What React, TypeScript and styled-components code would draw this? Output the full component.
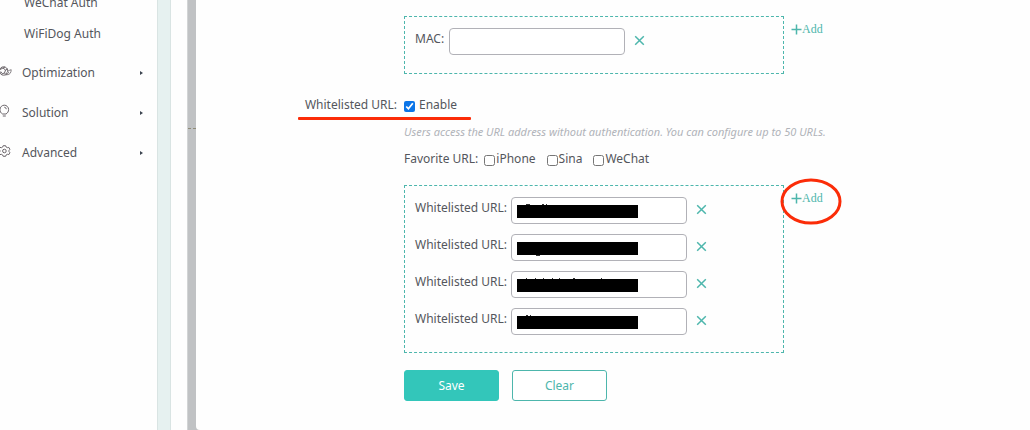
import React from 'react';
import styled, { createGlobalStyle } from 'styled-components';

const teal = '#4db6ac';
const red = '#fb2c08';

const GlobalStyle = createGlobalStyle`
  *, *::before, *::after { box-sizing: border-box; }
  body {
    margin: 0;
    background: #fefefe;
    color: #54565c;
    font-family: "Noto Sans", "Open Sans", sans-serif;
    font-size: 12px;
    line-height: 18px;
  }
  button, input { font: inherit; }
`;

const Page = styled.div`
  display: flex;
  min-height: 100vh;
  overflow: hidden;
`;

const Sidebar = styled.nav`
  flex: 0 0 157px;
  margin-top: -13px;
`;

const NavList = styled.ul`
  margin: 0;
  padding: 0;
  list-style: none;
`;

const SubList = styled(NavList)`
  padding-bottom: 4px;
`;

const SubLink = styled.a`
  display: flex;
  align-items: center;
  height: 31px;
  padding-left: 24px;
  color: inherit;
  text-decoration: none;
`;

const NavLink = styled.a`
  display: flex;
  align-items: center;
  height: 40px;
  padding-right: 14px;
  color: inherit;
  text-decoration: none;
`;

const NavIcon = styled.svg`
  flex: none;
  width: 12px;
  height: 14px;
  margin-right: 10px;
  margin-bottom: 4px;
  fill: none;
  stroke: #6b656a;
  stroke-width: 1;
`;

const Arrow = styled.span`
  margin-left: auto;
  border: solid transparent;
  border-width: 2px 0 2px 3px;
  border-left-color: #3c4450;
`;

const Track = styled.div`
  flex: 0 0 14px;
  margin-right: 16px;
  background: #e6f1f0;
  border: solid #d9e4e3;
  border-width: 0 1px;
`;

const Splitter = styled.div`
  flex: 0 0 9px;
  padding-top: 128px;
  background: #c0c2c4;
  border-left: 1px solid #d2d4d5;
`;

const Grip = styled.div`
  height: 1px;
  border-top: 1px dashed #8f8c78;
`;

const Main = styled.main`
  flex: 1;
  min-width: 0;
  display: flex;
  background: #c0c2c4;
`;

const Form = styled.form`
  flex: 1;
  min-width: 0;
  padding: 16px 16px 28px 0;
  background: #fefefe;
  border-bottom-left-radius: 4px;
`;

const FormRow = styled.div<{ $gap?: number }>`
  display: grid;
  grid-template-columns: 201px minmax(0, 1fr);
  column-gap: 7px;
  margin-bottom: ${(p) => p.$gap ?? 0}px;
`;

const RowLabel = styled.div`
  text-align: right;
`;

const Underlined = styled.div`
  position: relative;
`;

const Underline = styled.div`
  position: absolute;
  left: 102px;
  top: 21px;
  width: 173px;
  height: 3px;
  border-radius: 1px;
  background: ${red};
`;

const Controls = styled.div`
  grid-column: 2;
  display: flex;
  align-items: flex-start;
`;

const EntryBox = styled.div`
  display: grid;
  row-gap: 10px;
  flex: 0 1 380px;
  padding: 11px 10px 18px;
  border: 1px dashed ${teal};
`;

const UrlBox = styled(EntryBox)`
  padding-bottom: 17px;
`;

const Entry = styled.div`
  display: flex;
  align-items: flex-start;
`;

const EntryLabel = styled.label`
  min-width: 30px;
  padding-top: 2px;
  white-space: nowrap;
`;

const InputWrap = styled.div`
  position: relative;
  flex: 0 1 176px;
  margin-left: 4px;
`;

const TextInput = styled.input`
  display: block;
  width: 100%;
  height: 27px;
  padding: 0 6px;
  background: #fff;
  border: 1px solid #b1b1b7;
  border-radius: 4px;
`;

const Redaction = styled.svg`
  position: absolute;
  left: 6px;
  top: 7px;
  width: 121px;
  height: 15px;
`;

const RemoveButton = styled.button`
  display: flex;
  margin: 7px 0 0 9px;
  padding: 0;
  border: 0;
  background: none;
  stroke: ${teal};
`;

const AddWrap = styled.div`
  position: relative;
  margin: 4px 0 0 7px;
`;

const AddButton = styled.button`
  display: flex;
  align-items: center;
  padding: 0;
  border: 0;
  background: none;
  color: ${teal};
  stroke: ${teal};
  font-family: "Liberation Serif", serif;
`;

const Circle = styled.svg`
  position: absolute;
  left: -11px;
  top: -11px;
  width: 62px;
  height: 47px;
  pointer-events: none;
`;

const CheckLabel = styled.label<{ $spaced?: boolean }>`
  display: flex;
  align-items: center;
  gap: ${(p) => (p.$spaced ? 4 : 1)}px;
  margin-right: 11px;
`;

const Checkbox = styled.input`
  width: 11px;
  height: 11px;
  margin: 2px 0 0;
  accent-color: #0b75e8;
`;

const Hint = styled.p`
  grid-column: 2;
  margin: 0;
  color: #b0b3b9;
  font-size: 11px;
  font-style: italic;
`;

const Legend = styled.span`
  margin-right: 6px;
`;

const Action = styled.button<{ $primary?: boolean }>`
  width: 95px;
  height: 31px;
  margin-right: 13px;
  padding: 0;
  border: 1px solid ${(p) => (p.$primary ? '#33c6ba' : teal)};
  border-radius: 3px;
  background: ${(p) => (p.$primary ? '#33c6ba' : '#fff')};
  color: ${(p) => (p.$primary ? '#fff' : teal)};
  font-size: 12px;
`;

const Remove = ({ name }: { name: string }) => (
  <RemoveButton type="button" aria-label={`Remove ${name}`}>
    <svg width="11" height="11" viewBox="0 0 11 11" strokeWidth="1.5">
      <path d="M1.2 1.2l8.6 8.6M9.8 1.2l-8.6 8.6" />
    </svg>
  </RemoveButton>
);

const Add = ({ circled }: { circled?: boolean }) => (
  <AddWrap>
    <AddButton type="button">
      <svg width="11" height="11" viewBox="0 0 11 11" strokeWidth="1.5">
        <path d="M5.5 0.5v10M0.5 5.5h10" />
      </svg>
      Add
    </AddButton>
    {circled && (
      <Circle viewBox="0 0 62 47" fill="none" stroke={red} strokeWidth="3">
        <ellipse cx="31" cy="23.5" rx="29" ry="21.6" />
      </Circle>
    )}
  </AddWrap>
);

const sections = [
  {
    name: 'Optimization',
    icon: (
      <>
        <circle cx="3.6" cy="7" r="4.2" />
        <path d="M0 5.500l3-1.500 2.500 2-1 3L1.500 10M3 4l2-1M5.500 6L8 5M4.500 9l1.500 1.500M0 8l2 .5" />
        <path d="M6.500 10.500c0-3 2-4 4.700-4.800 0 3-1.400 5-4 5zM6 11.500l3-3.500" strokeWidth="0.8" fill="#fefefe" />
      </>
    ),
  },
  {
    name: 'Solution',
    icon: (
      <path d="M2.600 10C0.800 9 -.2 7.500 0 5.500a4.300 4.300 0 0 1 8.600 0c0 2-1 3.500-2.600 4.500zM2.800 12h3M4.300 3.200a2.200 2.200 0 0 1 2 2" />
    ),
  },
  {
    name: 'Advanced',
    icon: (
      <>
        <path d="M3.200 1.700h2.400l.5 1.300 1.300.7 1.400-.3 1.100 1.900-.9 1.100v1.200l.9 1.100-1.100 1.900-1.400-.3-1.300.7-.5 1.300H3.200l-.5-1.300-1.300-.7-1.400.3-1.100-1.900.9-1.100V6.400l-.9-1.100L0 3.400l1.400.3L2.700 3z" />
        <circle cx="4.400" cy="7" r="1.800" />
      </>
    ),
  },
];

/* Traces of the masked addresses that show above or below each bar. */
const masked = [
  'M9 .5h4M25 .5h2M29 .5h1',
  'M19 14.500h4',
  'M9 .5h1M18 .5h1M26 .5h1M35 .5h1M42 .5h1M56 .5h2M84 .5h1',
  'M9 .5h2M13 .5h1',
];

export default function App() {
  return (
    <>
      <GlobalStyle />
      <Page>
        <Sidebar aria-label="Settings">
          <SubList>
            <li><SubLink href="#wechat">WeChat Auth</SubLink></li>
            <li><SubLink href="#wifidog">WiFiDog Auth</SubLink></li>
          </SubList>
          <NavList>
            {sections.map((s) => (
              <li key={s.name}>
                <NavLink href={`#${s.name.toLowerCase()}`}>
                  <NavIcon viewBox="0 0 12 14" aria-hidden="true">{s.icon}</NavIcon>
                  {s.name}
                  <Arrow />
                </NavLink>
              </li>
            ))}
          </NavList>
        </Sidebar>
        <Track />
        <Splitter><Grip /></Splitter>
        <Main>
          <Form onSubmit={(e) => e.preventDefault()}>
            <FormRow $gap={22}>
              <Controls>
                <EntryBox>
                  <Entry>
                    <EntryLabel htmlFor="mac">MAC:</EntryLabel>
                    <InputWrap><TextInput id="mac" /></InputWrap>
                    <Remove name="MAC" />
                  </Entry>
                </EntryBox>
                <Add />
              </Controls>
            </FormRow>
            <Underlined>
              <FormRow $gap={9}>
                <RowLabel>Whitelisted URL:</RowLabel>
                <Controls>
                  <CheckLabel $spaced>
                    <Checkbox type="checkbox" defaultChecked />
                    Enable
                  </CheckLabel>
                </Controls>
              </FormRow>
              <Underline />
            </Underlined>
            <FormRow $gap={9}>
              <Hint>
                Users access the URL address without authentication. You can configure up to 50 URLs.
              </Hint>
            </FormRow>
            <FormRow $gap={17}>
              <Controls>
                <Legend>Favorite URL:</Legend>
                {['iPhone', 'Sina', 'WeChat'].map((n) => (
                  <CheckLabel key={n}>
                    <Checkbox type="checkbox" />
                    {n}
                  </CheckLabel>
                ))}
              </Controls>
            </FormRow>
            <FormRow $gap={17}>
              <Controls>
                <UrlBox>
                  {masked.map((d, i) => (
                    <Entry key={i}>
                      <EntryLabel htmlFor={`url-${i}`}>Whitelisted URL:</EntryLabel>
                      <InputWrap>
                        <TextInput id={`url-${i}`} />
                        <Redaction viewBox="0 0 121 15" aria-hidden="true">
                          <rect y="1" width="121" height="13" />
                          <path d={d} stroke="#333" />
                        </Redaction>
                      </InputWrap>
                      <Remove name="URL" />
                    </Entry>
                  ))}
                </UrlBox>
                <Add circled />
              </Controls>
            </FormRow>
            <FormRow>
              <Controls>
                <Action type="submit" $primary>Save</Action>
                <Action type="reset">Clear</Action>
              </Controls>
            </FormRow>
          </Form>
        </Main>
      </Page>
    </>
  );
}
